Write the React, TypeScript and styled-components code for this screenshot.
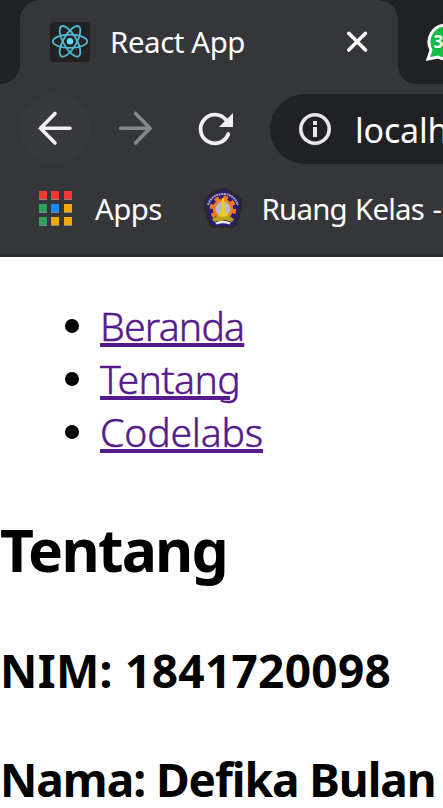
import React from "react";
import styled, { createGlobalStyle } from "styled-components";

const Global = createGlobalStyle`
  * { box-sizing: border-box; }
  body { margin: 0; background: #fff; font-family: "Noto Sans", "Open Sans", sans-serif; }
`;

const Window = styled.div`
  width: 443px;
  height: 808px;
  overflow: hidden;
  background: #fff;
`;

const TabStrip = styled.div`
  display: flex;
  height: 84px;
  background: #35363a;
`;

const TabEdge = styled.div<{ $side: "left" | "right" }>`
  flex: none;
  width: ${(p) => (p.$side === "left" ? 20 : 45)}px;
  background: #202124;
  border-radius: ${(p) => (p.$side === "left" ? "0 0 20px 0" : "0 0 0 18px")};
  padding: ${(p) => (p.$side === "left" ? "0" : "22px 0 0 27px")};
  overflow: hidden;
`;

const TabHolder = styled.div`
  flex: none;
  width: 378px;
  background: linear-gradient(#202124 0 22px, #35363a 22px);
`;

const ActiveTab = styled.div`
  display: flex;
  align-items: center;
  height: 84px;
  padding: 0 29px 0 30px;
  border-radius: 20px 20px 0 0;
  background: #35363a;
`;

const Label = styled.span<{ $size: number; $spacing?: number }>`
  font-size: ${(p) => p.$size}px;
  letter-spacing: ${(p) => p.$spacing ?? 0}px;
  line-height: 40px;
  color: #fff;
  white-space: nowrap;
`;

const TabTitle = styled(Label)`
  flex: 1;
  margin-left: 20px;
`;

const Icon = styled.svg`
  display: block;
  flex: none;
`;

const Toolbar = styled.div`
  display: flex;
  align-items: center;
  height: 90px;
  padding-left: 20px;
  background: #35363a;
`;

const NavButton = styled.div<{ $lit?: boolean }>`
  flex: none;
  width: 70px;
  height: 70px;
  margin-right: 10px;
  border-radius: 50%;
  background: ${(p) => (p.$lit ? "#38393d" : "transparent")};
`;

const AddressBar = styled.div`
  display: flex;
  align-items: center;
  flex: none;
  width: 300px;
  height: 70px;
  margin-left: 10px;
  padding-left: 28px;
  border-radius: 35px;
  background: #202124;
`;

const Address = styled(Label)`
  margin: 1px 0 0 23px;
`;

const Bookmarks = styled.div`
  display: flex;
  align-items: center;
  height: 83px;
  padding: 0 0 12px 37px;
  background: #35363a;
  border-bottom: 3px solid #292a2c;
`;

const AppGrid = styled.div`
  display: grid;
  grid-template-columns: repeat(3, 8px);
  gap: 4px 4.5px;
  margin-left: 1.5px;
`;

const AppDot = styled.i<{ $color: string }>`
  height: 9px;
  background: ${(p) => p.$color};
  border-bottom: 1px solid #85868a;
`;

const BookmarkLabel = styled(Label)<{ $gap: number }>`
  margin: 1px 0 0 ${(p) => p.$gap}px;
  word-spacing: 1.5px;
`;

const Crest = styled(Icon)`
  margin-left: 41px;
`;

const Nav = styled.ul`
  list-style: none;
  margin: 41px 0 0;
  padding: 0 0 0 65px;
`;

const NavItem = styled.li`
  display: flex;
  align-items: center;
  height: 53px;
  &::before {
    content: "";
    width: 14px;
    height: 14px;
    margin: 3px 21px 0 0;
    border-radius: 50%;
    background: #000;
  }
`;

const NavLink = styled.a<{ $spacing: number }>`
  padding-top: 1px;
  font-size: 39.2px;
  font-weight: 350;
  line-height: 53px;
  letter-spacing: ${(p) => p.$spacing}px;
  color: #551a8b;
  -webkit-text-stroke: 0.5px #551a8b;
  text-decoration: underline;
  text-decoration-thickness: 3.5px;
  text-underline-offset: 1.5px;
`;

const Title = styled.h1`
  margin: 52px 0 0;
  font-size: 58.8px;
  line-height: 80px;
  letter-spacing: -1.75px;
`;

const Detail = styled.h2<{ $gap: number; $spacing: number }>`
  margin: ${(p) => p.$gap}px 0 0;
  font-size: 46px;
  line-height: 58px;
  letter-spacing: ${(p) => p.$spacing}px;
  white-space: nowrap;
`;

const ReactLogo = () => (
  <Icon width="40" height="40" viewBox="0 0 40 40">
    <rect width="40" height="40" rx="4" fill="#222" />
    <circle cx="20" cy="19.3" r="3.2" fill="#61dafb" />
    <g fill="none" stroke="#53b9d5" strokeWidth="1.8">
      {[0, 60, 120].map((a) => (
        <ellipse key={a} cx="20" cy="19.3" rx="17.2" ry="6.6" transform={`rotate(${a} 20 19.3)`} />
      ))}
    </g>
  </Icon>
);

const CrestLogo = () => (
  <Crest width="40" height="40" viewBox="0 0 40 40">
    <path d="M15 1Q20 -1 25 1L36 8Q41 12 39 19L35 35Q33 40 28 40H12Q7 40 5 35L1 19Q-1 12 4 8Z" fill="#292828" />
    <path d="M16 3Q20 1 24 3L33 9Q38 13 37 18L33 34Q31 38 26 38H14Q9 38 7 34L3 18Q2 13 7 9Z" fill="#2b1a70" />
    <path d="M5 17Q9 6 20 6T35 17" fill="none" stroke="#aaa3c3" strokeWidth="2" strokeDasharray="2 .6" />
    <circle cx="20" cy="21" r="11.5" fill="none" stroke="#f47c20" strokeWidth="3.5" strokeDasharray="4.6 4.43" />
    <circle cx="20" cy="21" r="8.8" fill="#b9b6d8" stroke="#f47c20" strokeWidth="3" />
    <path d="M19 10h2l1.5 14 3 5h-11l3-5Z" fill="#e0d021" />
    <path d="M9 31Q14 27 20 29Q26 27 31 31L29 34Q20 30 11 34Z" fill="#b5a315" />
    <path d="M12 34.5Q20 31 28 34.5L26 36.5Q20 34 14 36.5Z" fill="#eee" />
  </Crest>
);

const DOTS = ["#f9382f", "#f9382f", "#f9382f", "#2fa05a", "#1e88f5", "#f5a800", "#2fa05a", "#f5a800", "#f5a800"];

export default function App() {
  return (
    <Window>
      <Global />
      <TabStrip>
        <TabEdge $side="left" />
        <TabHolder>
          <ActiveTab>
            <ReactLogo />
            <TabTitle $size={29.4} $spacing={-0.4}>React App</TabTitle>
            <Icon width="24" height="24" viewBox="0 0 24 24">
              <path d="M3.8 3.3 20.5 20M20.5 3.3 3.8 20" stroke="#fff" strokeWidth="3.6" strokeLinecap="round" />
            </Icon>
          </ActiveTab>
        </TabHolder>
        <TabEdge $side="right">
          <Icon width="40" height="40" viewBox="0 0 40 40">
            <path d="M21 3a17 17 0 0 0-15 25L3 37 13 35A17 17 0 1 0 21 3Z" fill="#13bd43" stroke="#fff" strokeWidth="3" />
            <text x="8.5" y="26" fontSize="17" fontWeight="700" fill="#fff">3</text>
          </Icon>
        </TabEdge>
      </TabStrip>
      <Toolbar>
        <NavButton $lit>
          <Icon width="70" height="70" viewBox="0 0 70 70">
            <path d="M50 34.3H20.5M35 19.5 20.5 34.3 35 49" fill="none" stroke="#f1f1f4" strokeWidth="3.6" strokeLinecap="round" />
          </Icon>
        </NavButton>
        <NavButton>
          <Icon width="70" height="70" viewBox="0 0 70 70">
            <path d="M20.5 34.3H50M35.5 19.5 50 34.3 35.5 49" fill="none" stroke="#86878a" strokeWidth="3.6" strokeLinecap="round" />
          </Icon>
        </NavButton>
        <NavButton>
          <Icon width="70" height="70" viewBox="0 0 70 70">
            <path d="M46 26A14.3 14.3 0 1 0 48.3 40" fill="none" stroke="#f1f1f4" strokeWidth="3.8" strokeLinecap="round" />
            <path d="M53 19V33H39Z" fill="#f1f1f4" />
          </Icon>
        </NavButton>
        <AddressBar>
          <Icon width="34" height="34" viewBox="0 0 34 34">
            <circle cx="17" cy="17" r="14.2" fill="none" stroke="#e8e8ea" strokeWidth="3.6" />
            <path d="M15 9h4v4h-4zM15 15h4v10h-4z" fill="#e8e8ea" />
          </Icon>
          <Address $size={34} $spacing={-0.2}>localhost:3000</Address>
        </AddressBar>
      </Toolbar>
      <Bookmarks>
        <AppGrid>
          {DOTS.map((c, i) => (
            <AppDot key={i} $color={c} />
          ))}
        </AppGrid>
        <BookmarkLabel $size={29.4} $spacing={-0.6} $gap={23.5}>Apps</BookmarkLabel>
        <CrestLogo />
        <BookmarkLabel $size={29.4} $spacing={-0.8} $gap={19}>Ruang Kelas -</BookmarkLabel>
      </Bookmarks>
      <Nav>
        <NavItem><NavLink $spacing={-0.8}>Beranda</NavLink></NavItem>
        <NavItem><NavLink $spacing={-0.6}>Tentang</NavLink></NavItem>
        <NavItem><NavLink $spacing={-0.2}>Codelabs</NavLink></NavItem>
      </Nav>
      <Title>Tentang</Title>
      <Detail $gap={52} $spacing={0.3}>NIM: 1841720098</Detail>
      <Detail $gap={51} $spacing={-1.05}>Nama: Defika Bulan</Detail>
    </Window>
  );
}
